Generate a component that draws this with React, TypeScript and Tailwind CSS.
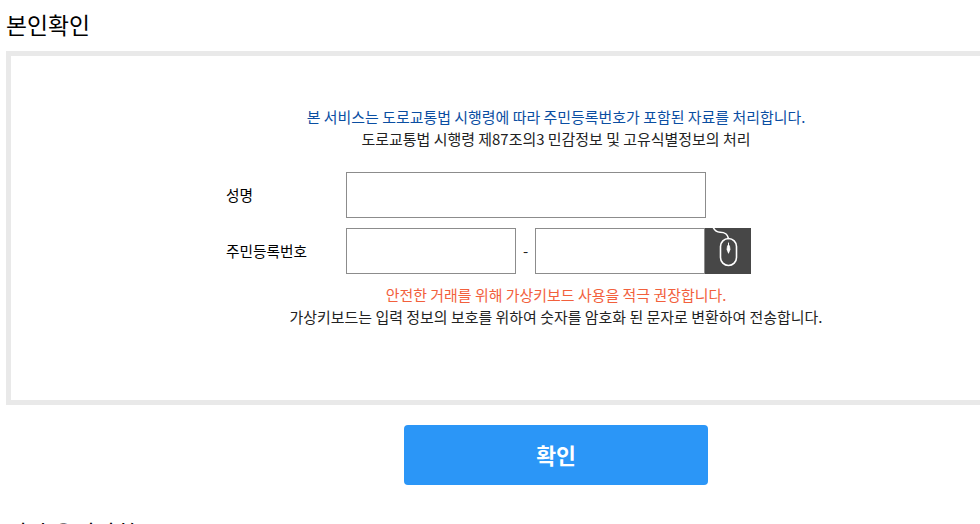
export default function App() {
  return (
    <div className="h-[524px] w-[980px] overflow-hidden bg-white text-[#222] [font-family:'Noto_Sans_CJK_KR','Noto_Sans',sans-serif]">
      <div className="w-[1100px] ml-[6px]">
        <h2 className="h-[51px] pt-[8px] text-[22.8px] leading-[34px] font-normal text-black">본인확인</h2>
        <div className="h-[354px] border-[5px] border-[#e9e9e9] flex flex-col items-center pt-[50px]">
          <p className="text-[14.96px] leading-[22px] text-[#0a4ea2] text-center">본 서비스는 도로교통법 시행령에 따라 주민등록번호가 포함된 자료를 처리합니다.</p>
          <p className="text-[14.96px] leading-[22px] text-center">도로교통법 시행령 제87조의3 민감정보 및 고유식별정보의 처리</p>
          <div className="w-[660px] mt-[22px] flex flex-col gap-[10px]">
            <div className="flex items-center">
              <label className="w-[120px] text-[14.7px] text-black">성명</label>
              <input className="w-[360px] h-[46px] border border-[#8c8c8c] bg-white" />
            </div>
            <div className="flex items-center">
              <label className="w-[120px] text-[14.7px] text-black">주민등록번호</label>
              <input className="w-[170px] h-[46px] border border-[#8c8c8c] bg-white" />
              <span className="w-[19px] text-center text-[15px]">-</span>
              <input className="w-[170px] h-[46px] border border-[#8c8c8c] bg-white" />
              <div className="w-[46px] h-[46px] bg-[#474747]">
                <svg width="46" height="46" viewBox="0 0 46 46" fill="none" stroke="#fff" strokeWidth="1.6" strokeLinecap="round">
                  <path d="M8.500 0C10 3 12 4.200 15 4.200C20 4.200 22.500 5.500 23.500 10.500" />
                  <rect x="15.500" y="10.500" width="16" height="27" rx="8" />
                  <path d="M23.500 15V25" strokeWidth="1" />
                  <path d="M22.500 18L22 21.500L23.500 25L25 21.500L24.500 18Z" fill="#fff" strokeWidth="0.8" />
                </svg>
              </div>
            </div>
          </div>
          <p className="mt-[10px] text-[14.96px] leading-[22px] text-[#f2603c] text-center">안전한 거래를 위해 가상키보드 사용을 적극 권장합니다.</p>
          <p className="text-[14.96px] leading-[22px] text-center">가상키보드는 입력 정보의 보호를 위하여 숫자를 암호화 된 문자로 변환하여 전송합니다.</p>
        </div>
        <div className="mt-[20px] flex justify-center">
          <button className="w-[304px] h-[60px] rounded-[4px] bg-[#2b96f7] text-white text-[21.6px] font-bold">확인</button>
        </div>
        <h2 className="mt-[31px] text-[22.8px] leading-[34px] font-normal text-black">기타 유의사항</h2>
      </div>
    </div>
  );
}
